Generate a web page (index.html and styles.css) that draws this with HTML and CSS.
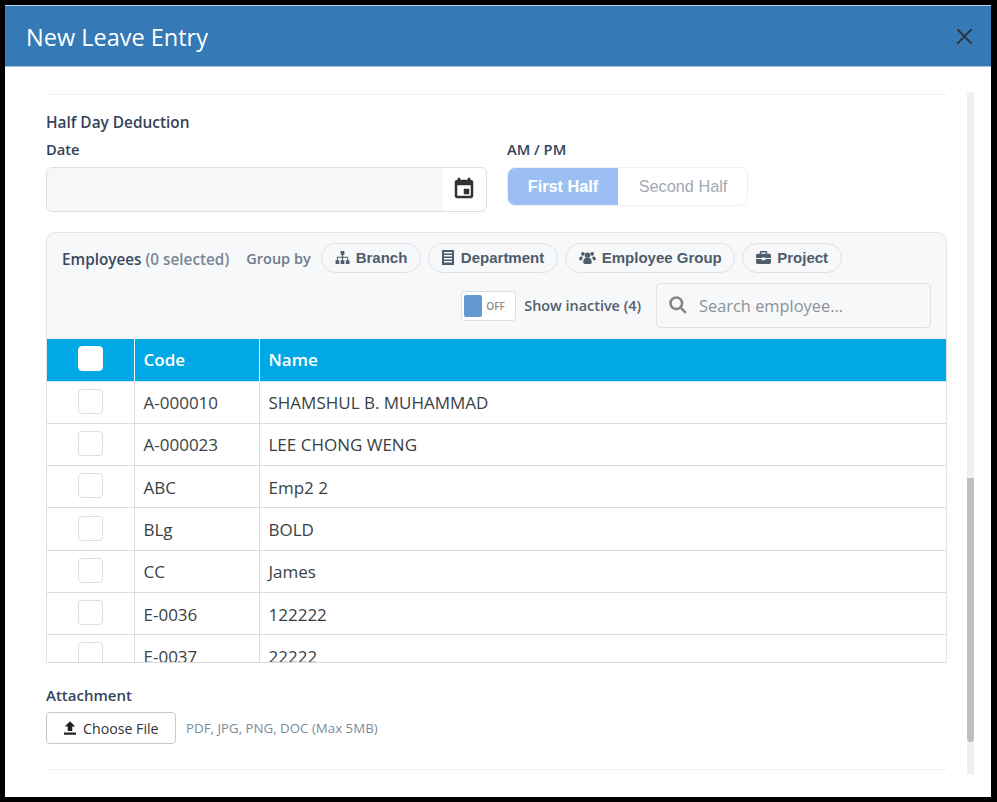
FILE: index.html
```html
<!DOCTYPE html>
<html lang="en">
<head>
<meta charset="utf-8">
<title>New Leave Entry</title>
<link rel="stylesheet" href="styles.css">
</head>
<body>
<div class="frame">
  <div class="modal">
    <header class="modal-head">
      <h1 class="modal-title">New Leave Entry</h1>
      <svg class="close-icon" viewBox="0 0 18 18" aria-label="Close"><path d="M1.5 1.5l15 15M16.5 1.5l-15 15"/></svg>
    </header>
    <div class="modal-body">
      <div class="scroll-content">
        <hr class="rule rule-top">
        <div class="section-title">Half Day Deduction</div>
        <div class="form-row">
          <div class="date-field">
            <label class="field-label">Date</label>
            <div class="date-input">
              <div class="date-fill"></div>
              <div class="date-addon">
                <svg class="cal-icon" viewBox="0 0 24 24"><path d="M17 12h-5v5h5v-5zM16 1v2H8V1H6v2H5c-1.11 0-1.99.9-1.99 2L3 19c0 1.1.89 2 2 2h14c1.1 0 2-.9 2-2V5c0-1.1-.9-2-2-2h-1V1h-2zm3 18H5V8h14v11z"/></svg>
              </div>
            </div>
          </div>
          <div class="ampm-field">
            <label class="field-label">AM / PM</label>
            <div class="segment">
              <span class="seg seg-on">First Half</span>
              <span class="seg seg-off">Second Half</span>
            </div>
          </div>
        </div>
        <section class="emp-card">
          <div class="emp-toolbar">
            <div class="toolbar-row">
              <span class="emp-title">Employees <span class="emp-count">(0 selected)</span></span>
              <span class="group-by">Group by</span>
              <span class="pill pill-first"><svg class="pill-icon i-branch" viewBox="0 0 16 14"><path d="M6 0h4v4H8.700v2.200H14V10h1.500v4h-4v-4H13V7.300H8.600V10H10v4H6v-4h1.400V7.300H3V10h1.500v4h-4v-4H2V6.200h5.300V4H6z"/></svg>Branch</span>
              <span class="pill"><svg class="pill-icon i-dept" viewBox="0 0 12 15"><path fill-rule="evenodd" d="M0 0h12v15H0zM2 2v1.500h8V2zM2 5v1.500h8V5zM2 8v1.500h8V8zM2 11v1.500h8V11z"/></svg>Department</span>
              <span class="pill"><svg class="pill-icon i-group" viewBox="0 0 18 14"><circle cx="4" cy="3" r="2"/><circle cx="14" cy="3" r="2"/><circle cx="9" cy="4.500" r="3"/><path d="M0 9c0-2 1-3 2.500-3 .8 0 1.300.2 1.800.6C3.500 7.500 3 8.500 3 10H1C.4 10 0 9.600 0 9zM18 9c0-2-1-3-2.500-3-.8 0-1.300.2-1.800.6.800.9 1.300 1.900 1.300 3.400h2c.6 0 1-.4 1-1zM4.500 11c0-2 1.300-3.500 2.500-3.500h4c1.200 0 2.500 1.500 2.500 3.500v1.500c0 .9-.6 1.500-1.500 1.500H6c-.9 0-1.500-.6-1.500-1.500z"/></svg>Employee Group</span>
              <span class="pill"><svg class="pill-icon i-brief" viewBox="0 0 16 14"><path fill-rule="evenodd" d="M5 0h6c.6 0 1 .4 1 1v2h2.500c.8 0 1.500.7 1.500 1.500V7.500H10V7H6v.5H0V4.500C0 3.700.7 3 1.500 3H4V1c0-.6.4-1 1-1zM5.500 1.500V3h5V1.500zM0 8.500h6V10h4V8.500h6v4c0 .8-.7 1.500-1.500 1.500h-13C.7 14 0 13.300 0 12.500z"/></svg>Project</span>
            </div>
            <div class="toolbar-row toolbar-row-end">
              <span class="switch"><span class="switch-knob"></span><span class="switch-text">OFF</span></span>
              <span class="inactive-label">Show inactive (4)</span>
              <div class="search-box">
                <svg class="search-icon" viewBox="0 0 18 18"><circle cx="7.300" cy="7.300" r="5.800"/><path d="M11.800 11.800l5 5"/></svg>
                <span class="search-ph">Search employee...</span>
              </div>
            </div>
          </div>
          <div class="table-clip">
            <table class="emp-table">
              <thead>
                <tr><th class="col-check"><span class="check check-head"></span></th><th class="col-code">Code</th><th>Name</th></tr>
              </thead>
              <tbody>
                <tr><td class="col-check"><span class="check"></span></td><td>A-000010</td><td>SHAMSHUL B. MUHAMMAD</td></tr>
                <tr><td class="col-check"><span class="check"></span></td><td>A-000023</td><td>LEE CHONG WENG</td></tr>
                <tr><td class="col-check"><span class="check"></span></td><td>ABC</td><td>Emp2 2</td></tr>
                <tr><td class="col-check"><span class="check"></span></td><td>BLg</td><td>BOLD</td></tr>
                <tr><td class="col-check"><span class="check"></span></td><td>CC</td><td>James</td></tr>
                <tr><td class="col-check"><span class="check"></span></td><td>E-0036</td><td>122222</td></tr>
                <tr><td class="col-check"><span class="check"></span></td><td>E-0037</td><td>22222</td></tr>
              </tbody>
            </table>
          </div>
        </section>
        <div class="attach-title">Attachment</div>
        <div class="attach-row">
          <span class="file-btn"><svg class="upload-icon" viewBox="0 0 24 24"><path d="M9 16h6v-6h4l-7-7-7 7h4v6zm-5 2h16v3H4z"/></svg>Choose File</span>
          <span class="file-hint">PDF, JPG, PNG, DOC (Max 5MB)</span>
        </div>
        <hr class="rule rule-bottom">
      </div>
      <div class="scroll-track"><div class="scroll-thumb"></div></div>
    </div>
  </div>
</div>
</body>
</html>
```
FILE: styles.css
```css
* { box-sizing: border-box; }
html, body { margin: 0; padding: 0; height: 100%; }
body { background: #000; font-family: "Open Sans", "Noto Sans", sans-serif; overflow: hidden; }

.frame { width: 997px; height: 802px; padding: 5px 6px 5px 5px; background: #000; }
.modal { height: 100%; background: #fff; display: flex; flex-direction: column; border-top: 1px solid #c3d4e6; }

.modal-head { height: 61px; flex: none; background: #3579b6; border-bottom: 1px solid #a9c3dc; display: flex; align-items: center; justify-content: space-between; padding: 0 18px 0 21px; }
.modal-title { margin: 2px 0 0; font-size: 23.500px; font-weight: 400; color: #fff; }
.close-icon { width: 17px; height: 17px; fill: none; stroke: #2e3338; stroke-width: 2.100; }

.modal-body { flex: 1; min-height: 0; display: flex; padding: 0 17px 0 41px; }
.scroll-content { width: 901px; flex: none; }
.scroll-track { width: 7px; margin: 25px 0 23px 20px; background: #f0f0f0; display: flex; flex-direction: column; justify-content: flex-end; padding-bottom: 32px; }
.scroll-thumb { height: 264px; background: #bfbfbf; border-radius: 0 0 4px 4px; }

.rule { border: 0; height: 1px; background: #eeeff1; margin: 0; }
.rule-top { margin-top: 27px; }
.rule-bottom { margin-top: 25px; }

.section-title { margin-top: 18px; font-size: 15.400px; line-height: 20px; font-weight: 600; color: #34435a; }
.form-row { display: flex; margin-top: 6px; }
.field-label { display: block; font-size: 14.700px; line-height: 20px; font-weight: 600; color: #34435a; }
.date-field { width: 441px; }
.ampm-field { margin-left: 20px; }

.date-input { margin-top: 8px; height: 45px; border: 1px solid #dcdee1; border-radius: 6px; display: flex; overflow: hidden; }
.date-fill { width: 396px; background: #f7f7f7; }
.date-addon { flex: 1; display: flex; align-items: center; justify-content: center; padding: 0 2px 2px 0; }
.cal-icon { width: 24px; height: 24px; fill: #333; stroke: #333; stroke-width: .5; }

.segment { margin-top: 8px; display: flex; width: 241px; height: 39px; border: 1px solid #eef0f2; border-radius: 8px; overflow: hidden; font-family: "Liberation Sans", Arial, sans-serif; font-size: 16.300px; }
.seg { display: flex; align-items: center; justify-content: center; }
.seg-on { width: 110px; background: #9bbff3; color: #fff; font-weight: 700; }
.seg-off { flex: 1; padding-left: 1px; color: #a3a9b1; }

.emp-card { margin-top: 20px; border: 1px solid #e2e5e8; border-bottom: 0; border-radius: 10px 10px 0 0; background: #f6f8fa; overflow: hidden; }
.emp-toolbar { height: 106px; padding: 10px 15px 0; }
.toolbar-row { display: flex; align-items: center; height: 30px; }
.toolbar-row-end { justify-content: flex-end; margin-top: 10px; height: 45px; }

.emp-title { margin-top: 2px; font-size: 15.300px; font-weight: 600; color: #3a4a5e; }
.emp-count { color: #7a8694; font-weight: 600; }
.group-by { margin: 1px 0 0 17px; font-size: 14.500px; font-weight: 600; color: #6f7b88; }
.pill { margin-left: 7px; height: 30px; padding: 0 12.500px 2px 13px; display: inline-flex; align-items: center; border: 1px solid #dde2e7; border-radius: 15px; font-family: "Liberation Sans", Arial, sans-serif; font-size: 15px; font-weight: 700; color: #4f5c6b; }
.pill-first { margin-left: 10px; }
.pill-icon { fill: #4f5c6b; margin-right: 6px; flex: none; }
.i-branch { width: 15px; height: 13px; }
.i-dept { width: 12px; height: 15px; margin-right: 7px; }
.i-group { width: 17px; height: 13px; }
.i-brief { width: 15px; height: 13px; }

.switch { width: 55px; height: 30px; border: 1px solid #dcdfe3; background: #fff; border-radius: 3px; display: flex; align-items: center; padding: 0 2px; }
.switch-knob { width: 18px; height: 22px; border-radius: 2px; background: #6299d1; }
.switch-text { margin-left: 4px; font-size: 10px; font-weight: 600; color: #8a8a8a; }
.inactive-label { margin-left: 8px; font-size: 14.400px; font-weight: 600; color: #52606f; }
.search-box { margin-left: 15px; width: 275px; height: 45px; border: 1px solid #dfe2e5; border-radius: 4px; display: flex; align-items: center; padding-left: 12px; }
.search-icon { width: 18px; height: 18px; fill: none; stroke: #858585; stroke-width: 2.600; margin-top: -1px; }
.search-ph { margin-left: 12px; font-size: 16.400px; color: #8d9298; }

.table-clip { height: 324px; overflow: hidden; background: #fff; border-bottom: 1px solid #dcdcdc; }
.emp-table { width: 100%; border-collapse: collapse; table-layout: fixed; font-size: 17px; color: #3a3f45; }
.emp-table th { height: 42px; background: #00a8e6; color: #fff; font-weight: 600; text-align: left; padding: 0 9px; border-left: 1px solid #fff; border-bottom: 1px solid #cfe9f5; }
.emp-table th:first-child { border-left: 0; }
.emp-table td { height: 42.300px; padding: 1px 9px 0; border: 1px solid #dcdcdc; border-top: 0; }
.emp-table td:first-child { border-left: 0; }
.emp-table td:last-child { border-right: 0; }
.col-check { width: 87px; text-align: center !important; padding: 0 0 2px !important; }
.col-code { width: 125px; }
.check { display: block; margin: 0 auto; width: 25px; height: 25px; border: 1px solid #dedede; border-radius: 4px; background: #fff; }
.check-head { border-color: #fff; }

.attach-title { margin-top: 22px; font-size: 15px; line-height: 20px; font-weight: 600; color: #34435a; }
.attach-row { margin-top: 7px; display: flex; align-items: center; }
.file-btn { height: 32px; width: 130px; display: flex; align-items: center; padding-left: 14px; border: 1px solid #c9c9c9; border-radius: 4px; font-size: 14.200px; color: #333; }
.upload-icon { width: 18px; height: 18px; fill: #222; margin-right: 4px; flex: none; }
.file-hint { margin-left: 10px; font-size: 13.300px; color: #7b8b9e; }
```
